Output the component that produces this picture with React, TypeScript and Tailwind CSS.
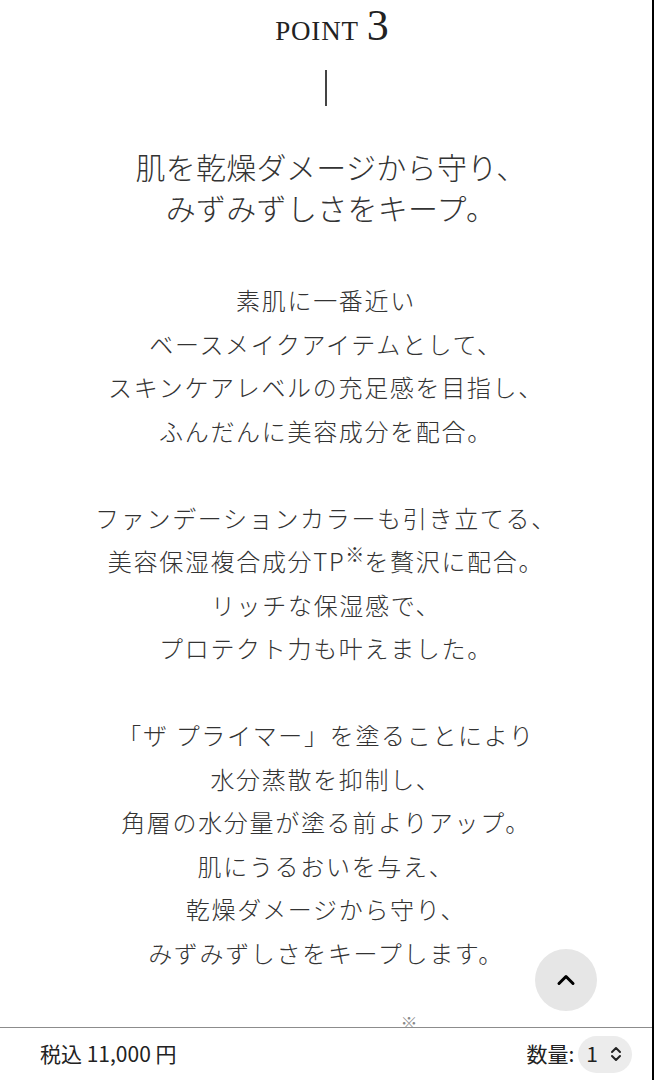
import { ChevronUp } from 'lucide-react';

const jp = { fontFamily: '"Noto Sans CJK JP", "Noto Sans", sans-serif' };

const paragraphs: React.ReactNode[][] = [
  ['素肌に一番近い', 'ベースメイクアイテムとして、', 'スキンケアレベルの充足感を目指し、', 'ふんだんに美容成分を配合。'],
  [
    'ファンデーションカラーも引き立てる、',
    <>美容保湿複合成分TP<sup className="text-[19px] relative -top-[9px] tracking-normal">※</sup>を贅沢に配合。</>,
    'リッチな保湿感で、',
    'プロテクト力も叶えました。',
  ],
  [
    '「ザ プライマー」を塗ることにより',
    '水分蒸散を抑制し、',
    '角層の水分量が塗る前よりアップ。',
    '肌にうるおいを与え、',
    '乾燥ダメージから守り、',
    'みずみずしさをキープします。',
  ],
];

export default function App() {
  return (
    <div className="min-h-screen bg-white border-r-2 border-black text-[#333]" style={jp}>
      <section className="flex flex-col items-center pt-[4px] pb-[120px]">
        <div className="flex items-baseline gap-[8px] h-[42px] pl-[12px] text-[#222]" style={{ fontFamily: '"Liberation Serif", "DejaVu Serif", serif' }}>
          <span className="text-[27px] tracking-[0.03em]">POINT</span>
          <span className="text-[44px] leading-none">3</span>
        </div>
        <div className="w-[1.5px] h-[36px] bg-[#444] mt-[24px]" />

        <h2 className="mt-[40px] pl-[10px] text-[30px] tracking-[0.01em] font-light leading-[41px] text-center text-[#333]">
          肌を乾燥ダメージから守り、
          <br />
          みずみずしさをキープ。
        </h2>

        <div className="mt-[50px] flex flex-col gap-[43.5px] text-[24px] tracking-[0.07em] leading-[43.5px] font-light text-center">
          {paragraphs.map((lines, i) => (
            <p key={i}>
              {lines.map((l, j) => (
                <span key={j} className="block">{l}</span>
              ))}
            </p>
          ))}
        </div>

        <p className="mt-[47px] text-[18px] leading-[28px] text-[#888] text-center">
          美容保湿複合成分TP<sup className="text-[17px] relative -top-[13px]">※</sup>
          <br />
          ※ ヒアルロン酸Na、スクワラン、グリセリン（保湿）
        </p>
      </section>

      <button className="fixed right-[57px] bottom-[69px] w-[62px] h-[62px] rounded-full bg-[#e6e6e6] flex items-center justify-center">
        <ChevronUp className="w-[28px] h-[28px] text-black" strokeWidth={2.6} />
      </button>

      <div className="fixed left-0 right-[2px] bottom-0 h-[53px] bg-white border-t border-[#8c8c8c] flex items-center justify-between pl-[40px] pr-[20px] text-[#222]">
        <span className="text-[21px]">税込 11,000 円</span>
        <div className="flex items-center gap-[4px]">
          <span className="text-[21px]">数量:</span>
          <div className="flex items-center gap-[12px] h-[37px] pl-[8px] pr-[10px] rounded-full bg-[#ececec]">
            <span className="text-[21px]">1</span>
            <svg width="12" height="18" viewBox="0 0 12 18" fill="none" stroke="#222" strokeWidth="2" strokeLinecap="round" strokeLinejoin="round">
              <path d="M2 7l4-4 4 4" />
              <path d="M2 11l4 4 4-4" />
            </svg>
          </div>
        </div>
      </div>
    </div>
  );
}
